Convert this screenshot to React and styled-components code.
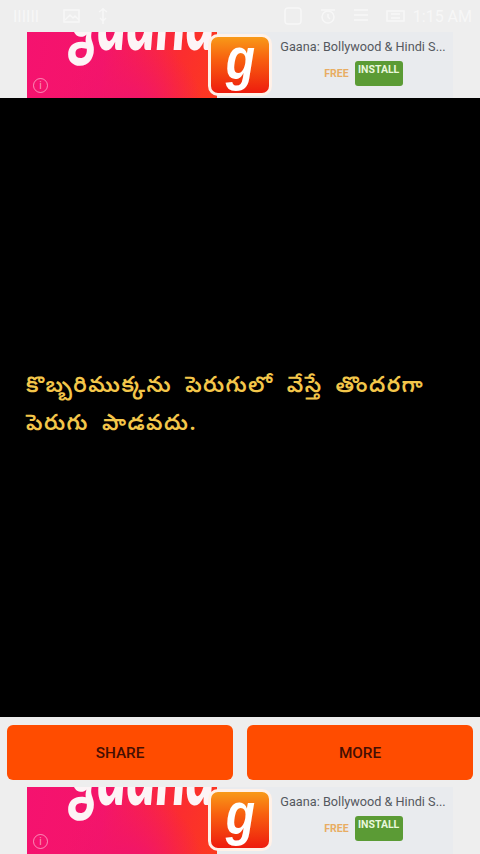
import React from 'react'
import styled, { createGlobalStyle } from 'styled-components'

const GlobalStyle = createGlobalStyle`
  html, body {
    margin: 0;
    padding: 0;
    background: #eeeeee;
  }
  #root {
    height: 854px;
  }
`

function StatusIcons() {
  return (
    <StatusBar>
      <StatusGroup>
        <StatusText>IIIIII</StatusText>
        <svg width="20" height="16" viewBox="0 0 20 16" fill="none" stroke="#fff" strokeWidth="1.5">
          <rect x="2" y="2" width="15" height="12" />
          <path d="M3 12l5-5 3 3 2-2 4 4" />
        </svg>
        <svg width="12" height="18" viewBox="0 0 12 18" fill="none" stroke="#fff" strokeWidth="1.5">
          <path d="M6 1v16M2 5l4-3 4 3M3 11l3 3 3-3" />
        </svg>
      </StatusGroup>
      <StatusGroup>
        <svg width="22" height="20" viewBox="0 0 22 20" fill="none" stroke="#fff" strokeWidth="1.5">
          <rect x="3" y="2" width="16" height="16" rx="3" />
        </svg>
        <svg width="18" height="18" viewBox="0 0 18 18" fill="none" stroke="#fff" strokeWidth="1.5">
          <circle cx="9" cy="10" r="6" />
          <path d="M2 3h14M9 7v3l2 2" />
        </svg>
        <svg width="18" height="18" viewBox="0 0 18 18" fill="none" stroke="#fff" strokeWidth="1.5">
          <path d="M2 3h14M2 8h14M2 13h14" />
        </svg>
        <BatteryTime>
          <svg width="22" height="14" viewBox="0 0 22 14" fill="none" stroke="#fff" strokeWidth="1.5">
            <rect x="2" y="2" width="17" height="10" />
            <path d="M6 5h9M6 9h9" />
          </svg>
          <StatusText>1:15 AM</StatusText>
        </BatteryTime>
      </StatusGroup>
    </StatusBar>
  )
}

function AdBanner({ height }) {
  return (
    <Ad $height={height}>
      <AdInner>
        <AdArt>
          <Wordmark>gaana</Wordmark>
          <InfoMark>i</InfoMark>
        </AdArt>
        <AppLogo>
          <LogoLetter>g</LogoLetter>
        </AppLogo>
        <AdInfo>
          <AdTitle>Gaana: Bollywood &amp; Hindi S...</AdTitle>
          <AdActions>
            <FreeTag>FREE</FreeTag>
            <InstallTag>INSTALL</InstallTag>
          </AdActions>
        </AdInfo>
      </AdInner>
    </Ad>
  )
}

export default function App() {
  return (
    <>
      <GlobalStyle />
      <Page>
        <StatusIcons />
        <AdBanner height={66} />
        <Content>
          <Tip>
            కొబ్బరిముక్కను పెరుగులో వేస్తే తొందరగా పెరుగు పాడవదు.
          </Tip>
        </Content>
        <Buttons>
          <ActionButton>SHARE</ActionButton>
          <ActionButton>MORE</ActionButton>
        </Buttons>
        <AdBanner height={67} />
      </Page>
    </>
  )
}

const Page = styled.div`
  width: 480px;
  height: 854px;
  display: flex;
  flex-direction: column;
  overflow: hidden;
  background: #eeeeee;
  font-family: "Roboto", "Liberation Sans", sans-serif;
`

const StatusBar = styled.div`
  height: 32px;
  flex: none;
  box-sizing: border-box;
  display: flex;
  align-items: center;
  justify-content: space-between;
  padding: 0 8px 0 13px;
  opacity: 0.55;
`

const StatusGroup = styled.div`
  display: flex;
  align-items: center;
  gap: 15px;
`

const BatteryTime = styled.div`
  display: flex;
  align-items: center;
  gap: 6px;
`

const StatusText = styled.span`
  color: #ffffff;
  font-size: 16px;
  margin-right: 8px;

  ${BatteryTime} & {
    margin-right: 0;
  }
`

const Ad = styled.div`
  height: ${(props) => props.$height}px;
  flex: none;
  padding: 0 27px;
`

const AdInner = styled.div`
  position: relative;
  height: 100%;
  display: flex;
  background: #e9ebee;
  overflow: hidden;
`

const AdArt = styled.div`
  position: relative;
  width: 190px;
  flex: none;
  overflow: hidden;
  background:
    radial-gradient(circle at 55% 120%, #f0136e 0%, rgba(240, 19, 110, 0) 55%),
    linear-gradient(100deg, #f5126f 0%, #f4156a 40%, #fb2d30 78%, #fc3a1e 100%);
`

const Wordmark = styled.div`
  position: absolute;
  left: 43px;
  top: -56px;
  color: #fdf4f6;
  font-family: "Lato", sans-serif;
  font-size: 84px;
  font-weight: 900;
  font-style: italic;
  line-height: 84px;
  transform: scaleX(0.66);
  transform-origin: left center;
`

const InfoMark = styled.div`
  position: absolute;
  left: 6px;
  bottom: 5px;
  width: 13px;
  height: 13px;
  border: 1.5px solid rgba(255, 255, 255, 0.5);
  border-radius: 50%;
  color: rgba(255, 255, 255, 0.55);
  font-size: 10px;
  line-height: 13px;
  text-align: center;
`

const AppLogo = styled.div`
  position: absolute;
  left: 181px;
  top: 2px;
  width: 64px;
  height: 62px;
  box-sizing: border-box;
  display: flex;
  align-items: center;
  justify-content: center;
  border: 3px solid #fff1e8;
  border-radius: 10px;
  background: linear-gradient(180deg, #f89a18 0%, #f8600f 40%, #ee1c0e 100%);
`

const LogoLetter = styled.span`
  color: #ffffff;
  font-family: "Liberation Sans", sans-serif;
  font-size: 60px;
  font-weight: 700;
  font-style: italic;
  line-height: 1;
  margin-top: -12px;
  transform: scaleX(0.8);
`

const AdInfo = styled.div`
  flex: 1;
  padding: 7px 0 0 56px;
  display: flex;
  flex-direction: column;
  align-items: center;
  min-width: 0;
`

const AdTitle = styled.div`
  color: #55585e;
  font-size: 12.7px;
  white-space: nowrap;
`

const AdActions = styled.div`
  display: flex;
  align-items: center;
  gap: 6px;
  margin-top: 7px;
  margin-left: 1px;
`

const FreeTag = styled.span`
  color: #e8ad63;
  font-size: 10.5px;
  font-weight: 700;
`

const InstallTag = styled.span`
  width: 48px;
  height: 25px;
  box-sizing: border-box;
  padding-top: 2px;
  border-radius: 3px;
  background: #5b9b35;
  color: #e9f7dc;
  font-size: 10.5px;
  font-weight: 700;
  text-align: center;
`

const Content = styled.div`
  flex: 1;
  background: #000000;
  display: flex;
  align-items: center;
  padding: 0 40px 12px 26px;
`

const Tip = styled.p`
  margin: 0;
  color: #f3c64a;
  font-family: "Noto Sans", "Noto Sans Telugu", "Lohit Telugu", sans-serif;
  font-size: 22px;
  font-weight: 600;
  line-height: 38px;
  letter-spacing: 1.4px;
  word-spacing: 6px;
`

const Buttons = styled.div`
  height: 70px;
  flex: none;
  box-sizing: border-box;
  display: flex;
  gap: 14px;
  padding: 8px 7px 7px;
`

const ActionButton = styled.button`
  flex: 1;
  border: none;
  border-radius: 6px;
  background: #ff4c00;
  color: #450f03;
  font-family: "Roboto", "Liberation Sans", sans-serif;
  font-size: 15.3px;
  font-weight: 500;
`
